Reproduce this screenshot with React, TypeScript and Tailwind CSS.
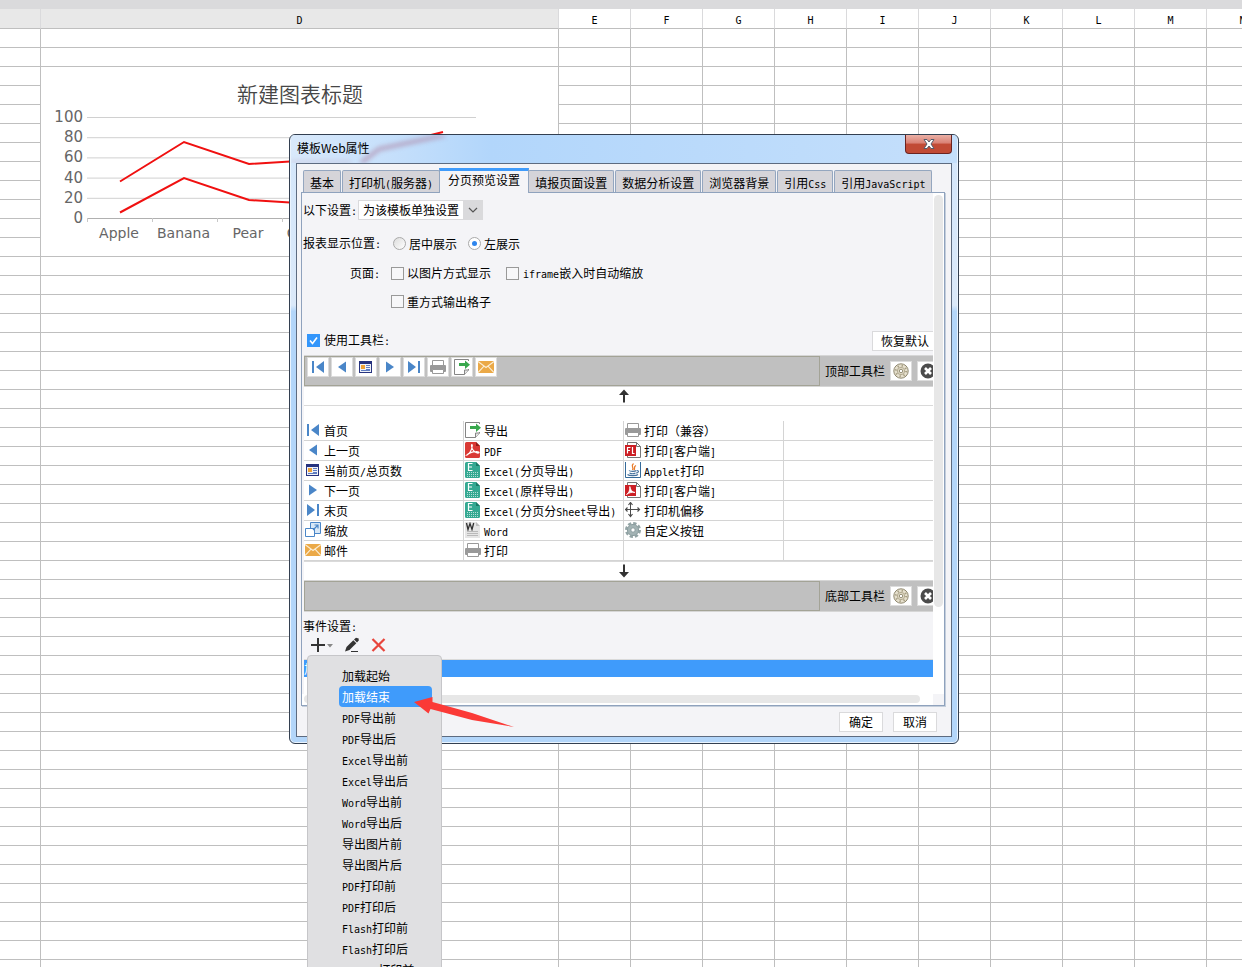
import React, { useState } from "react";

const COLUMNS = ["E", "F", "G", "H", "I", "J", "K", "L", "M", "N", "O", "P", "Q", "R", "S", "T"];
const ROWS = Array.from({ length: 56 }, (_, i) => i);

/* Latin runs are set in a monospace face half as wide as a Chinese character. */
function T({ children }: { children: string }) {
  return (
    <span className="whitespace-nowrap">
      {children.split(/([\x21-\x7e]+)/).map((part, i) =>
        i % 2 === 1 ? (
          <span key={i} className="font-['DejaVu_Sans_Mono',monospace] text-[10px]">
            {part}
          </span>
        ) : (
          part
        ),
      )}
    </span>
  );
}

/* ---------- icons ---------- */

type IconProps = { children: React.ReactNode };
function Icon({ children }: IconProps) {
  return (
    <svg viewBox="0 0 16 16" className="size-4 shrink-0" aria-hidden="true">
      {children}
    </svg>
  );
}

const FirstIcon = () => (
  <Icon>
    <path d="M2 2h2v12H2zM14 2v12L6 8z" fill="#4a86c8" />
  </Icon>
);
const PrevIcon = () => (
  <Icon>
    <path d="M12 2.500v11L4 8z" fill="#4a86c8" />
  </Icon>
);
const NextIcon = () => (
  <Icon>
    <path d="M4 2.500v11L12 8z" fill="#4a86c8" />
  </Icon>
);
const LastIcon = () => (
  <Icon>
    <path d="M12 2h2v12h-2zM2 2v12l8-6z" fill="#4a86c8" />
  </Icon>
);
const PageIcon = () => (
  <Icon>
    <path d="M1 2h13v12H1z" fill="#26337f" />
    <path d="M2 5h11v8H2z" fill="#eef1f8" />
    <path d="M3 6h4v4H3z" fill="#eea236" />
    <path d="M8 6.500h4M8 8.500h4M8 10.500h4M3 11.500h9" stroke="#5f7cc0" strokeWidth="1" />
  </Icon>
);
const ZoomIcon = () => (
  <Icon>
    <path d="M5.500.500h10v11h-10z" fill="#d8e8f7" stroke="#4a86c8" />
    <path d="M.500 6.500h9v8h-9z" fill="#fff" stroke="#4a86c8" />
    <path d="M8 8l5-5M9.500 3H13v3.500" fill="none" stroke="#4a86c8" strokeWidth="1.200" />
  </Icon>
);
const MailIcon = () => (
  <Icon>
    <path d="M0 2h16v12H0z" fill="#eba947" />
    <path d="M0 2.500l8 6 8-6M0 13.500l6-6.300M16 13.500l-6-6.300" fill="none" stroke="#fbeed6" strokeWidth="1.100" />
  </Icon>
);
const PrinterIcon = () => (
  <Icon>
    <path d="M2.500 1.500h11V7h-11z" fill="#fff" stroke="#999" />
    <path d="M1 6h14a1 1 0 011 1v5a1 1 0 01-1 1H1a1 1 0 01-1-1V7a1 1 0 011-1z" fill="#999" />
    <path d="M2.500 10.500h11v4h-11z" fill="#fff" stroke="#999" />
  </Icon>
);
const ExportIcon = () => (
  <Icon>
    <path d="M.500.500h14v10.500l-4 4.500H.500z" fill="#fff" stroke="#858585" />
    <path d="M10.500 15.500V11h4" fill="#e4e4e4" stroke="#858585" />
    <path d="M13 2h3v8h-3z" fill="#fff" />
    <path d="M5 4h6V1.500l5 4.200-5 4.200V7H5z" fill="#39a84d" />
  </Icon>
);
const PdfIcon = () => (
  <Icon>
    <path d="M1.500 0H11l4 4v10.500a1.500 1.500 0 01-1.500 1.500h-12A1.500 1.500 0 010 14.500v-13A1.500 1.500 0 011.500 0z" fill="#d93a35" />
    <path d="M11 0l4 4h-4z" fill="#8e1c18" />
    <path d="M2 13c2-.500 5-5 5.300-9.500C7.300 2 6.300 2.300 6.500 4c.400 4 4 7.500 7 7 1.300-.400 0-1.500-2.500-1.300-3.500.200-7 1.300-9 3.300z" fill="none" stroke="#fff" strokeWidth="1.200" />
  </Icon>
);
const ExcelIcon = () => (
  <Icon>
    <path d="M1.500 0H11l4 4v10.500a1.500 1.500 0 01-1.500 1.500h-12A1.500 1.500 0 010 14.500v-13A1.500 1.500 0 011.500 0z" fill="#35a992" />
    <path d="M11 0l4 4h-4z" fill="#197a66" />
    <path d="M7.500 1.500h-4v7h4M3.500 5h3.500" fill="none" stroke="#fff" strokeWidth="1.200" />
    <path d="M2 10.500h11M2 12.500h11M2 14.500h11" stroke="#b5e0d7" strokeDasharray="1 1" />
  </Icon>
);
const WordIcon = () => (
  <Icon>
    <path d="M0 0h11l4 4v12H0z" fill="#e6e6e6" />
    <path d="M11 0l4 4h-4z" fill="#bdbdbd" />
    <path d="M1.500 1l1.500 6.500L5 1.500l2 6L8.700 1" fill="none" stroke="#333" strokeWidth="1.300" />
    <path d="M2 9.500h11M2 11.500h11M2 13.500h11" stroke="#b9b9b9" />
  </Icon>
);
const FlashIcon = () => (
  <Icon>
    <path d="M2.500.500h9l4 4v11h-13z" fill="#fff" stroke="#777" />
    <path d="M11.500.500v4h4" fill="none" stroke="#777" />
    <path d="M0 3h11v11H0z" fill="#cc1f24" />
    <path d="M5.500 5.500h-3v6M2.500 8.500h2.500M7.500 5v6.500H9.500" fill="none" stroke="#fff" strokeWidth="1.200" />
  </Icon>
);
const PdfPrintIcon = () => (
  <Icon>
    <path d="M2.500.500h9l4 4v11h-13z" fill="#fff" stroke="#777" />
    <path d="M11.500.500v4h4" fill="none" stroke="#777" />
    <path d="M0 3h11v11H0z" fill="#cc1f24" />
    <path d="M1.500 12.500C4 11 5 8 4.800 4.500 5.500 8 7 10 10 10.500 6.500 10 4 10.800 1.500 12.500z" fill="#fff" stroke="#fff" strokeWidth=".8" />
  </Icon>
);
const JavaIcon = () => (
  <Icon>
    <path d="M.500 0v15.500h15V0" fill="#fff" stroke="#356a99" />
    <path d="M8.500 1.500C5 4.500 9.500 5 7.500 8M11 3.500C8 5 10.500 6.500 9 8" fill="none" stroke="#e87b2a" strokeWidth="1.300" />
    <path d="M4 8.500c1 1.200 6 1.200 7.500 0M4.500 11c1.500.800 4.500.800 6 0M2.500 12.500c1.500 1.500 9 1.500 10.500 0M12 8.500c2.500 0 1.500 2.500-1 2.500" fill="none" stroke="#44719c" strokeWidth="1.100" />
  </Icon>
);
const MoveIcon = () => (
  <Icon>
    <path d="M0 7.500h15M5.500 1v13" stroke="#4c4c4c" fill="none" />
    <path d="M3.500 3l2-2.500 2 2.500M3.500 12l2 2.500 2-2.500M2.500 5.500L.500 7.500l2 2M12.500 5.500l2 2-2 2" fill="none" stroke="#4c4c4c" strokeWidth="1.200" />
  </Icon>
);
const SlateGearIcon = () => (
  <Icon>
    <circle cx="8" cy="8" r="6.800" fill="none" stroke="#93a4a5" strokeWidth="2.400" strokeDasharray="3.340 2" />
    <circle cx="8" cy="8" r="5.600" fill="#a3b3b4" stroke="#8b9d9f" />
    <circle cx="8" cy="8" r="2.200" fill="#fff" stroke="#8b9d9f" />
  </Icon>
);
const SandGearIcon = () => (
  <Icon>
    <circle cx="8" cy="8" r="7.200" fill="#e6e0ce" stroke="#8f886f" />
    <circle cx="8" cy="8" r="5.200" fill="none" stroke="#a8a085" strokeWidth="2" strokeDasharray="1.300 2.784" />
    <circle cx="8" cy="8" r="3.700" fill="#ded8c4" stroke="#a8a085" strokeWidth=".8" />
    <circle cx="8" cy="8" r="1.700" fill="#fff" stroke="#8f886f" strokeWidth=".9" />
  </Icon>
);
const CloseDotIcon = () => (
  <Icon>
    <circle cx="8" cy="8" r="7.500" fill="#4b4b4b" />
    <path d="M5 5l6 6M11 5l-6 6" stroke="#fff" strokeWidth="2.600" />
  </Icon>
);
function ArrowIcon({ down }: { down?: boolean }) {
  return (
    <svg viewBox="0 0 12 14" className={down ? "h-3.5 w-3 rotate-180" : "h-3.5 w-3"} aria-hidden="true">
      <path d="M6 .500L11 6H7v7.500H5V6H1z" fill="#333" />
    </svg>
  );
}

/* ---------- form parts ---------- */

function Check({ id, label, on, wide }: { id: string; label: string; on?: boolean; wide?: boolean }) {
  return (
    <span className={wide ? "flex items-center gap-1" : "flex items-center gap-[3px]"}>
      <span className="grid size-[13px]">
        <input
          id={id}
          type="checkbox"
          defaultChecked={on}
          className="peer col-start-1 row-start-1 size-[13px] appearance-none border border-[#999] bg-[#f7f7f9] checked:border-[#3396fb] checked:bg-[#3396fb]"
        />
        <svg viewBox="0 0 13 13" className="pointer-events-none col-start-1 row-start-1 hidden size-[13px] peer-checked:block" aria-hidden="true">
          <path d="M3 6.500l2.500 3L10 3.500" fill="none" stroke="#fff" strokeWidth="1.600" />
        </svg>
      </span>
      <label htmlFor={id}>
        <T>{label}</T>
      </label>
    </span>
  );
}

function Radio({ id, label, on }: { id: string; label: string; on?: boolean }) {
  return (
    <span className="flex items-center gap-[3px]">
      <span className="grid size-[13px] place-items-center">
        <input
          id={id}
          type="radio"
          name="position"
          defaultChecked={on}
          className="peer col-start-1 row-start-1 size-[13px] appearance-none rounded-full border border-[#a9a9a9] bg-linear-to-br from-[#dcdcdc] to-white checked:bg-none checked:bg-white"
        />
        <span className="pointer-events-none col-start-1 row-start-1 hidden size-[5px] rounded-full bg-[#2f86ee] peer-checked:block" />
      </span>
      <label htmlFor={id}>{label}</label>
    </span>
  );
}

function ToolBar({ label, children }: { label: string; children?: React.ReactNode }) {
  return (
    <div className="flex h-8 items-stretch border-y border-[#d6d6d6] bg-[#c0c0c0]">
      <div className="flex w-[516px] shrink-0 items-start gap-0.5 border border-[#a3a396] pl-0.5">{children}</div>
      <div className="flex flex-1 items-center gap-[5px] pl-[5px]">
        <span className="whitespace-nowrap">{label}</span>
        <button type="button" aria-label={label + "设置"} className="flex h-5 w-[22px] shrink-0 items-center justify-center border border-[#dcdcdc] bg-white">
          <SandGearIcon />
        </button>
        <button type="button" aria-label={label + "清空"} className="flex h-5 w-[22px] shrink-0 items-center justify-center border border-[#dcdcdc] bg-white">
          <CloseDotIcon />
        </button>
      </div>
    </div>
  );
}

/* ---------- data ---------- */

type Tool = [() => React.ReactElement, string] | null;

const TOP_TOOLS: [() => React.ReactElement, string][] = [
  [FirstIcon, "首页"],
  [PrevIcon, "上一页"],
  [PageIcon, "当前页/总页数"],
  [NextIcon, "下一页"],
  [LastIcon, "末页"],
  [PrinterIcon, "打印"],
  [ExportIcon, "导出"],
  [MailIcon, "邮件"],
];

const TOOL_ROWS: Tool[][] = [
  [[FirstIcon, "首页"], [ExportIcon, "导出"], [PrinterIcon, "打印（兼容）"], null],
  [[PrevIcon, "上一页"], [PdfIcon, "PDF"], [FlashIcon, "打印[客户端]"], null],
  [[PageIcon, "当前页/总页数"], [ExcelIcon, "Excel(分页导出)"], [JavaIcon, "Applet打印"], null],
  [[NextIcon, "下一页"], [ExcelIcon, "Excel(原样导出)"], [PdfPrintIcon, "打印[客户端]"], null],
  [[LastIcon, "末页"], [ExcelIcon, "Excel(分页分Sheet导出)"], [MoveIcon, "打印机偏移"], null],
  [[ZoomIcon, "缩放"], [WordIcon, "Word"], [SlateGearIcon, "自定义按钮"], null],
  [[MailIcon, "邮件"], [PrinterIcon, "打印"], null, null],
];

const TABS = ["基本", "打印机(服务器)", "分页预览设置", "填报页面设置", "数据分析设置", "浏览器背景", "引用Css", "引用JavaScript"];

const EVENTS = [
  "加载起始",
  "加载结束",
  "PDF导出前",
  "PDF导出后",
  "Excel导出前",
  "Excel导出后",
  "Word导出前",
  "Word导出后",
  "导出图片前",
  "导出图片后",
  "PDF打印前",
  "PDF打印后",
  "Flash打印前",
  "Flash打印后",
  "Applet打印前",
];

/* ---------- spreadsheet ---------- */

function Chart() {
  const ticks = [100, 80, 60, 40, 20, 0];
  return (
    <svg viewBox="0 0 517 188" className="block h-[188px] w-[517px]" role="img" aria-label="新建图表标题">
      <text x="259" y="35" textAnchor="middle" fontSize="21" fill="#464646" className="font-['Noto_Sans_CJK_SC',sans-serif] font-[350]">
        新建图表标题
      </text>
      {ticks.map((t, i) => (
        <g key={t}>
          <path d={`M46 ${50.5 + i * 20.2}H435`} stroke={t === 0 ? "#b0b0b0" : "#d0d0d0"} />
          <text x="42" y={55 + i * 20.2} textAnchor="end" fontSize="15" fill="#666" className="font-['DejaVu_Sans',sans-serif]">
            {t}
          </text>
        </g>
      ))}
      <path d="M46.500 151v4M111.500 151v4M176.500 151v4M241.500 151v4" stroke="#c8c8c8" />
      {["Apple", "Banana", "Pear", "Orange"].map((name, i) => (
        <text key={name} x={78 + i * 64.5} y="171" textAnchor="middle" fontSize="14" fill="#666" className="font-['DejaVu_Sans',sans-serif]">
          {name}
        </text>
      ))}
      <path d="M79 114.500L143 75l65 22 65-4 65-12 64-16" fill="none" stroke="#f01010" strokeWidth="2" />
      <path d="M79 145.500L143 111l65 22 65 4" fill="none" stroke="#f01010" strokeWidth="2" />
    </svg>
  );
}

function Sheet() {
  const cell = "h-[19px] border-r border-b border-[#bfbfbf] p-0";
  const head = "h-5 border-r border-b border-r-[#dadadc] border-b-[#bfbfbf] p-0 pt-1 text-center font-['DejaVu_Sans_Mono',monospace] text-[10px] leading-3 font-normal";
  return (
    <table className="min-w-[1711px] table-fixed border-separate border-spacing-0">
      <colgroup>
        <col className="w-[41px]" />
        <col className="w-[518px]" />
        {COLUMNS.map((c) => (
          <col key={c} className="w-[72px]" />
        ))}
      </colgroup>
      <thead>
        <tr>
          <th className={head + " bg-[#e8e8e8]"} />
          <th className={head + " bg-[#e8e8e8]"}>D</th>
          {COLUMNS.map((c) => (
            <th key={c} className={head}>
              {c}
            </th>
          ))}
        </tr>
      </thead>
      <tbody>
        {ROWS.map((r) => (
          <tr key={r}>
            <td className={cell} />
            {(r < 2 || r > 11) && <td className={cell} />}
            {r === 2 && (
              <td rowSpan={10} className="border-r border-b border-[#bfbfbf] p-0 align-top">
                <Chart />
              </td>
            )}
            {COLUMNS.map((c) => (
              <td key={c} className={cell} />
            ))}
          </tr>
        ))}
      </tbody>
    </table>
  );
}

/* ---------- dialog ---------- */

function ToolTable() {
  return (
    <table className="w-full table-fixed border-separate border-spacing-0 bg-white">
      <colgroup>
        <col className="w-[160px]" />
        <col className="w-[160px]" />
        <col className="w-[160px]" />
        <col />
      </colgroup>
      <tbody>
        {TOOL_ROWS.map((row, r) => (
          <tr key={r}>
            {row.map((tool, c) => {
              const ToolIcon = tool && tool[0];
              return (
                <td key={c} className="h-5 border-r border-b border-[#d4d4d4] p-0">
                  {tool && ToolIcon && (
                    <span className="flex h-[19px] items-start gap-[3px] pt-px pl-px leading-[18px]">
                      <ToolIcon />
                      <T>{tool[1]}</T>
                    </span>
                  )}
                </td>
              );
            })}
          </tr>
        ))}
      </tbody>
    </table>
  );
}

function Settings() {
  return (
    <div className="w-[calc(100%+10px)] shrink-0">
      <div className="flex h-[34px] items-center gap-px pl-px">
        <label htmlFor="scope">
          <T>以下设置:</T>
        </label>
        <span className="grid">
          <select id="scope" className="col-start-1 row-start-1 h-5 w-[125px] appearance-none border border-[#dadadc] bg-white pl-[4px] text-xs">
            <option>为该模板单独设置</option>
          </select>
          <span className="pointer-events-none col-start-1 row-start-1 flex w-5 items-center justify-center justify-self-end bg-[#dadadc]">
            <svg viewBox="0 0 10 6" className="h-1.5 w-2.5" aria-hidden="true">
              <path d="M1 1l4 4 4-4" fill="none" stroke="#555" strokeWidth="1.200" />
            </svg>
          </span>
        </span>
      </div>
      <div className="flex h-[33px] items-center pl-px">
        <span className="w-[90px]">
          <T>报表显示位置:</T>
        </span>
        <span className="flex gap-[11px]">
          <Radio id="center" label="居中展示" />
          <Radio id="left" label="左展示" on />
        </span>
      </div>
      <div className="flex h-[27px] items-center pl-12">
        <span className="w-[41px]">
          <T>页面:</T>
        </span>
        <span className="flex gap-[15px]">
          <Check id="asImage" label="以图片方式显示" />
          <Check id="iframeZoom" label="iframe嵌入时自动缩放" wide />
        </span>
      </div>
      <div className="flex h-[29px] items-center pl-[89px]">
        <Check id="cells" label="重方式输出格子" />
      </div>
      <div className="flex h-[39px] items-center justify-between pt-2.5 pl-[5px]">
        <Check id="useToolbar" label="使用工具栏:" on wide />
        <button type="button" className="h-5 w-[71px] border border-[#dadadc] bg-white pl-2 text-left">
          恢复默认
        </button>
      </div>
      <div className="pl-0.5">
        <ToolBar label="顶部工具栏">
          {TOP_TOOLS.map(([ToolIcon, name]) => (
            <button key={name} type="button" aria-label={name} className="flex h-5 w-[22px] items-center justify-center border border-[#dcdcdc] bg-white">
              <ToolIcon />
            </button>
          ))}
        </ToolBar>
        <button type="button" aria-label="上移" className="flex h-[19px] w-full items-center justify-center border-b border-[#dadada] bg-white">
          <ArrowIcon />
        </button>
        <div className="h-[15px] bg-white" />
        <ToolTable />
        <button type="button" aria-label="下移" className="flex h-[19px] w-full items-center justify-center border-t border-[#dadada] bg-white">
          <ArrowIcon down />
        </button>
        <ToolBar label="底部工具栏" />
      </div>
      <div className="h-6 pt-1 pl-px leading-5">
        <T>事件设置:</T>
      </div>
      <div className="flex h-[23px] items-center gap-[11px] pb-[5px] pl-2">
        <button type="button" aria-label="添加" className="flex items-center">
          <svg viewBox="0 0 23 16" className="h-4 w-[23px]" aria-hidden="true">
            <path d="M8 1v14M1 8h14" stroke="#333" strokeWidth="2" />
            <path d="M17 7h6l-3 3.500z" fill="#888" />
          </svg>
        </button>
        <button type="button" aria-label="编辑">
          <svg viewBox="0 0 16 16" className="size-4" aria-hidden="true">
            <path d="M1 14.500l1.500-4.500L9.300 3.200l3 3L5.500 13z" fill="#333" />
            <path d="M10 2.500l2-1.800 2.700.700v2l-1.700 2z" fill="#333" />
            <path d="M7 14.500h7" stroke="#333" />
          </svg>
        </button>
        <button type="button" aria-label="删除">
          <svg viewBox="0 0 16 16" className="size-4" aria-hidden="true">
            <path d="M1.500 2l12 12M13.500 2l-12 12" stroke="#e8453c" strokeWidth="2.200" />
          </svg>
        </button>
      </div>
      <div className="ml-0.5 h-[35px] border-t border-[#dadada] bg-white">
        <div className="h-[17px] bg-[#3f9bfb] leading-[17px] text-white">加载结束</div>
      </div>
    </div>
  );
}

function Dialog() {
  const [tab, setTab] = useState(2);
  return (
    <div
      role="dialog"
      aria-labelledby="dialog-title"
      className="absolute top-[134px] left-[289px] w-[670px] rounded-md border border-[#333f50] bg-linear-to-b from-[#d3e6fb] from-0% via-[#dbe9f9] via-28% to-[#b3d6fa] to-29% px-1.5 pb-1.5 shadow-[inset_0_0_0_1px_#eaf4fe]"
    >
      <div className="relative -mx-[5px] flex h-7 items-start justify-between overflow-hidden rounded-t bg-linear-to-r from-[#d9e9fb] via-[#b2d6fb] via-30% to-[#c4dffb] pl-1.5">
        <svg viewBox="0 0 300 28" className="pointer-events-none absolute top-0 left-0 h-7 w-[300px] opacity-60 blur-[2px]" aria-hidden="true">
          <path d="M70 28l18-14 66-14" fill="none" stroke="#b08fae" strokeWidth="5" />
          <path d="M0 27h60" fill="none" stroke="#c3b9d2" strokeWidth="3" />
        </svg>
        <h1 id="dialog-title" className="relative text-xs leading-[26px]">
          模板Web属性
        </h1>
        <button
          type="button"
          aria-label="关闭"
          className="mr-[5px] flex h-[19px] w-[47px] items-center justify-center rounded-b border border-t-0 border-[#6b2320] bg-linear-to-b from-[#eab0a6] from-0% via-[#d98074] via-45% to-[#c14a35] to-50%"
        >
          <svg viewBox="0 0 14 12" className="h-3 w-3.5" aria-hidden="true">
            <path d="M2 1.500h3L7 4l2-2.500h3L9 6l3 4.500H9L7 8l-2 2.500H2L5 6z" fill="#fff" stroke="#555c6c" />
          </svg>
        </button>
      </div>
      <div className="border border-[#5d6b80] bg-[#f4f4f7] pr-1.5 pl-1">
        <div role="tablist" className="flex h-7 items-end gap-px pl-0.5">
          {TABS.map((name, i) => (
            <button
              key={name}
              type="button"
              role="tab"
              aria-selected={tab === i}
              onClick={() => setTab(i)}
              className={
                tab === i
                  ? "relative -mr-[2px] -mb-px -ml-[2px] h-[25px] border-x border-t-[3px] border-[#94a6bf] border-t-[#3f9bfb] bg-[#f4f4f7] px-2 pb-1 leading-[18px]"
                  : "h-[22px] rounded-t-xs border border-b-0 border-[#94a6bf] bg-[#d5d4d9] px-1.5 leading-6"
              }
            >
              <T>{name}</T>
            </button>
          ))}
        </div>
        <div className="flex border border-[#8fa2bd] shadow-[1px_1px_0_#c4cedb]">
          <div className="min-w-0 flex-1 overflow-hidden">
            <Settings />
            <div className="h-[11px] bg-white pr-[13px] pl-0.5">
              <div className="h-2 translate-y-px rounded-full bg-[#e7e7e7]" />
            </div>
          </div>
          <div className="flex w-[11px] flex-col bg-white">
            <div className="flex-1 bg-white px-px pt-0.5">
              <div className="h-[412px] rounded-full bg-[#e7e7e7]" />
            </div>
            <div className="h-[11px] bg-[#f4f4f7]" />
          </div>
        </div>
        <div className="flex justify-end gap-2.5 pt-1.5 pr-2 pb-1">
          <button type="button" className="h-5 w-11 border border-[#dadadc] bg-white">
            确定
          </button>
          <button type="button" className="h-5 w-11 border border-[#dadadc] bg-white">
            取消
          </button>
        </div>
      </div>
    </div>
  );
}

function EventMenu() {
  return (
    <div role="menu" className="absolute top-[655px] left-[307px] w-[135px] rounded border border-[#c6c6c9] bg-[#e0e0e2] py-[9px] pr-[9px] pl-[31px]">
      {EVENTS.map((name, i) => (
        <button
          key={name}
          type="button"
          role="menuitem"
          className={
            i === 1
              ? "block h-[21px] w-full rounded bg-[#3f9bfb] pl-[3px] text-left leading-[21px] text-white"
              : "block h-[21px] w-full pl-[3px] text-left leading-[21px]"
          }
        >
          <T>{name}</T>
        </button>
      ))}
    </div>
  );
}

export default function App() {
  return (
    <main className="relative h-screen overflow-hidden bg-white font-['Noto_Sans_CJK_SC',sans-serif] text-xs text-black">
      <div className="h-[9px] bg-[#dadadc]" />
      <Sheet />
      <Dialog />
      <EventMenu />
      <svg viewBox="0 0 100 32" className="pointer-events-none absolute top-[696px] left-[414px] h-8 w-[100px]" aria-hidden="true">
        <path d="M0 6L18.500 1v5L58 17l42 14-42-7-41.500-11L14.500 17.500z" fill="#fb3a37" />
      </svg>
    </main>
  );
}
